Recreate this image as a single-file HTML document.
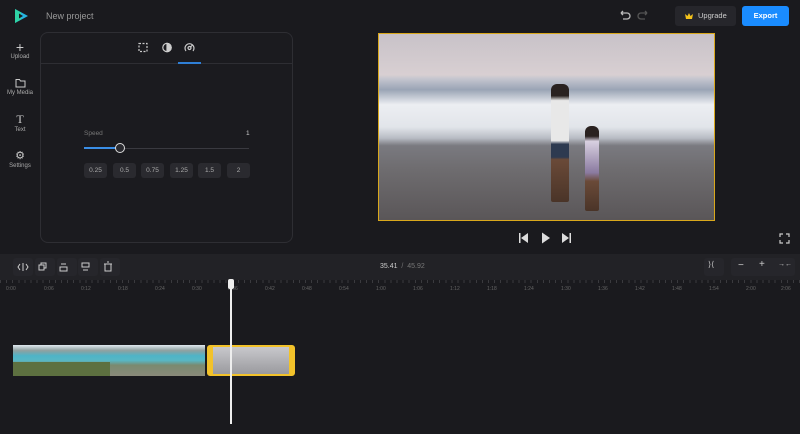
<!DOCTYPE html>
<html><head><meta charset="utf-8"><style>
*{margin:0;padding:0;box-sizing:border-box}
body{width:800px;height:434px;background:#1a1a1e;font-family:"Liberation Sans",sans-serif;color:#ccc;position:relative;overflow:hidden}
.a{position:absolute}
.side{font-size:6px;color:#aaa;text-align:center;width:40px}
.sb{background:#2a2a2f;border-radius:3px;font-size:6.5px;color:#aaa;text-align:center;line-height:15px;height:15px;width:23px}
.tb{background:#26262b;border-radius:3px;width:20px;height:18px}
.lab{font-size:5px;color:#666;top:286px}
</style></head><body>
<svg class="a" style="left:12px;top:7px" width="18" height="18" viewBox="0 0 18 18"><path d="M3 2 L16 9 L3 16 Z" fill="#27b5e0"/><path d="M3 2 L9 5.5 L9 12.5 L3 16 Z" fill="#2fd3a5"/><path d="M7 6.5 L11 9 L7 11.5Z" fill="#1a1a1e"/></svg>
<div class="a" style="left:46px;top:11px;font-size:9px;color:#999">New project</div>
<svg class="a" style="left:618px;top:10px" width="32" height="12" viewBox="0 0 32 12" fill="none" stroke-width="1.3"><path d="M3 3h6a3 3 0 010 6H5M3 3l2-2M3 3l2 2" stroke="#bbb"/><path d="M29 3h-6a3 3 0 000 6h4M29 3l-2-2M29 3l-2 2" stroke="#555"/></svg>
<div class="a" style="left:675px;top:6px;width:61px;height:20px;background:#26262b;border-radius:3px;font-size:7.5px;color:#ccc;line-height:20px;padding-left:23px">Upgrade</div>
<svg class="a" style="left:684px;top:12px" width="10" height="8"><path d="M1 2l2.5 2L5 1l1.5 3L9 2l-1 5H2z" fill="#f3c21b"/></svg>
<div class="a" style="left:742px;top:6px;width:47px;height:20px;background:#1a8cff;border-radius:3px;font-size:7.5px;color:#fff;line-height:20px;text-align:center;font-weight:bold">Export</div>

<div class="a side" style="left:0;top:40px"><div style="font-size:14px;color:#ccc;line-height:14px">+</div><div style="margin-top:0">Upload</div></div>
<svg class="a" style="left:15px;top:78px" width="11" height="10"><path d="M1 1.5h3.5l1 1.5H10V9H1z" fill="none" stroke="#ccc" stroke-width="1"/></svg>
<div class="a side" style="left:0;top:90px">My Media</div>
<div class="a side" style="left:0;top:112px;font-size:12px;color:#ccc;font-family:'Liberation Serif',serif">T</div>
<div class="a side" style="left:0;top:127px">Text</div>
<div class="a side" style="left:0;top:149px;font-size:11px;color:#ccc">⚙</div>
<div class="a side" style="left:0;top:163px">Settings</div>

<div class="a" style="left:40px;top:32px;width:253px;height:211px;border:1px solid #2e2e33;border-radius:8px;background:#1b1b1f"></div>
<div class="a" style="left:41px;top:63px;width:251px;height:1px;background:#2e2e33"></div>
<div class="a" style="left:178px;top:62px;width:23px;height:2px;background:#2f7fd6"></div>
<svg class="a" style="left:138px;top:42px" width="62" height="12" fill="none" stroke="#ccc" stroke-width="1.2"><rect x="1" y="1.5" width="8" height="8" stroke-dasharray="2 1.5"/><circle cx="29" cy="5.5" r="4.2"/><path d="M29 1.3a4.2 4.2 0 010 8.4z" fill="#ccc"/><path d="M48 9a4.5 4.5 0 117 0" /><circle cx="51.5" cy="6" r="1.5"/><path d="M52.5 5l2-2"/></svg>
<div class="a" style="left:84px;top:130px;font-size:6.5px;color:#777">Speed</div>
<div class="a" style="left:246px;top:130px;font-size:6.5px;color:#ccc">1</div>
<div class="a" style="left:84px;top:148px;width:165px;height:1px;background:#3a3a40"></div>
<div class="a" style="left:84px;top:147px;width:36px;height:2px;background:#3a8ee6"></div>
<div class="a" style="left:115px;top:143px;width:10px;height:10px;border-radius:50%;border:1.5px solid #ddd;background:#2a2a2f"></div>
<div class="a sb" style="left:84px;top:163px">0.25</div>
<div class="a sb" style="left:113px;top:163px">0.5</div>
<div class="a sb" style="left:141px;top:163px">0.75</div>
<div class="a sb" style="left:170px;top:163px">1.25</div>
<div class="a sb" style="left:198px;top:163px">1.5</div>
<div class="a sb" style="left:227px;top:163px">2</div>

<div class="a" style="left:378px;top:33px;width:337px;height:188px;border:1px solid #d9a81c;overflow:hidden;background:linear-gradient(#c8c2c8 0%,#d8cfd2 22%,#c5c6cf 24%,#9aa4b5 30%,#eceef2 38%,#e2e5ea 50%,#b8bcc4 56%,#7a7a80 60%,#6f6d70 72%,#5a5658 100%)">
<div class="a" style="left:172px;top:50px;width:18px;height:118px;background:linear-gradient(#2a2220 0,#2a2220 10%,#e8e8e8 14%,#e8e8e8 48%,#2d3a50 51%,#2d3a50 62%,#6a4a38 64%,#4a3428 100%);border-radius:6px 6px 2px 2px"></div>
<div class="a" style="left:206px;top:92px;width:14px;height:85px;background:linear-gradient(#2a2220 0,#2a2220 12%,#d8d0e0 18%,#8a7aa0 55%,#6a4a38 65%,#4a3428 100%);border-radius:6px 6px 2px 2px"></div>
</div>
<svg class="a" style="left:517px;top:231px" width="60" height="14" fill="#ddd"><rect x="2" y="2" width="1.5" height="10"/><path d="M11 2v10L4 7z"/><path d="M25 1.5v11L33 7z"/><path d="M45 2v10l7-5z"/><rect x="52.5" y="2" width="1.5" height="10"/></svg>
<svg class="a" style="left:779px;top:233px" width="11" height="11" fill="none" stroke="#ccc" stroke-width="1.2"><path d="M1 4V1h3M7 1h3v3M10 7v3H7M4 10H1V7"/></svg>

<div class="a" style="left:0;top:254px;width:800px;height:26px;background:#222226"></div>
<div class="a tb" style="left:13px;top:258px"></div><div class="a tb" style="left:35px;top:258px"></div><div class="a tb" style="left:57px;top:258px"></div><div class="a tb" style="left:78px;top:258px"></div><div class="a tb" style="left:100px;top:258px"></div>
<svg class="a" style="left:13px;top:258px" width="108" height="18" fill="none" stroke="#ccc" stroke-width="1"><path d="M7 6l-2 3 2 3M13 6l2 3-2 3M10 5v8"/><rect x="26" y="7" width="5" height="5"/><path d="M28 7V5h5v5h-2"/><rect x="47" y="9" width="7" height="4"/><path d="M48 6h5"/><rect x="69" y="5" width="7" height="4"/><path d="M70 12h5"/><path d="M91 6h8M92 6v7h6V6M94 4h2"/></svg>
<div class="a" style="left:380px;top:263px;font-size:7px;color:#ccc">35.41 <span style="color:#777">&nbsp;/&nbsp; 45.92</span></div>
<div class="a tb" style="left:704px;top:258px"></div><div class="a" style="left:731px;top:258px;width:64px;height:18px;background:#26262b;border-radius:3px"></div>
<div class="a" style="left:708px;top:260px;font-size:8px;color:#ccc">⟩⟨</div>
<div class="a" style="left:738px;top:260px;font-size:10px;color:#ccc">−</div>
<div class="a" style="left:759px;top:259px;font-size:10px;color:#ccc">+</div>
<div class="a" style="left:778px;top:261px;font-size:7px;color:#ccc">→←</div>

<div class="a" style="left:0;top:280px;width:800px;height:3px;background:repeating-linear-gradient(90deg,#3a3a3e 0 1px,transparent 1px 6.1px)"></div>
<div class="a lab" style="left:6px">0:00</div><div class="a lab" style="left:44px">0:06</div><div class="a lab" style="left:81px">0:12</div><div class="a lab" style="left:118px">0:18</div><div class="a lab" style="left:155px">0:24</div><div class="a lab" style="left:192px">0:30</div><div class="a lab" style="left:228px">0:36</div><div class="a lab" style="left:265px">0:42</div><div class="a lab" style="left:302px">0:48</div><div class="a lab" style="left:339px">0:54</div><div class="a lab" style="left:376px">1:00</div><div class="a lab" style="left:413px">1:06</div><div class="a lab" style="left:450px">1:12</div><div class="a lab" style="left:487px">1:18</div><div class="a lab" style="left:524px">1:24</div><div class="a lab" style="left:561px">1:30</div><div class="a lab" style="left:598px">1:36</div><div class="a lab" style="left:635px">1:42</div><div class="a lab" style="left:672px">1:48</div><div class="a lab" style="left:709px">1:54</div><div class="a lab" style="left:746px">2:00</div><div class="a lab" style="left:781px">2:06</div>

<div class="a" style="left:13px;top:345px;width:192px;height:31px;background:linear-gradient(#dfe9ef 0,#8fa0a0 18%,#4eb4c8 35%,#58b7c4 50%,#7a8a70 65%,#8a8a7a 100%)"></div>
<div class="a" style="left:13px;top:362px;width:97px;height:14px;background:#5d7040"></div>
<div class="a" style="left:207px;top:345px;width:88px;height:31px;border:2px solid #f2c22a;border-left-width:6px;border-right-width:6px;border-radius:3px;background:linear-gradient(#c8c8cc,#9a9a9e)"></div>
<div class="a" style="left:230px;top:283px;width:2px;height:141px;background:#eee"></div>
<div class="a" style="left:228px;top:279px;width:6px;height:10px;background:#eee;border-radius:2px"></div>
</body></html>
